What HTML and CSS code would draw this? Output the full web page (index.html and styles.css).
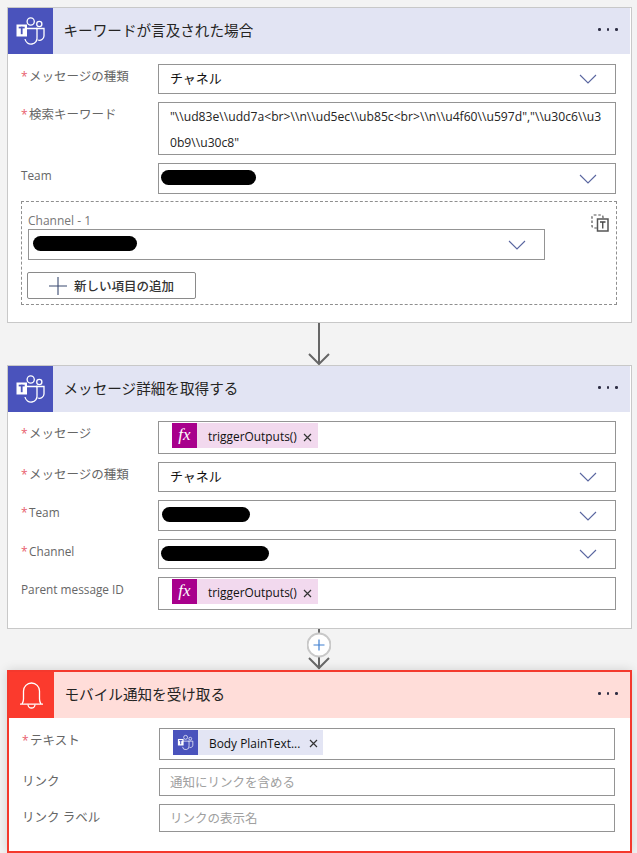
FILE: index.html
```html
<!DOCTYPE html>
<html lang="ja">
<head>
<meta charset="utf-8">
<title>フロー</title>
<link rel="stylesheet" href="styles.css">
</head>
<body>
<svg class="defs" width="0" height="0" aria-hidden="true">
  <symbol id="teams" viewBox="0 0 45 46">
    <circle cx="22.7" cy="13.5" r="3.6" fill="none" stroke="#fff" stroke-width="1.3"/>
    <circle cx="31.3" cy="16" r="2.6" fill="none" stroke="#fff" stroke-width="1.3"/>
    <path d="M28 20.5h8v7.5a4.5 4.5 0 0 1-6 4" fill="none" stroke="#fff" stroke-width="1.3"/>
    <path d="M17 20.5h12v8.500a6 6 0 0 1-12 2" fill="none" stroke="#fff" stroke-width="1.300"/>
    <rect x="8.500" y="16.500" width="10.500" height="12" fill="#fff"/>
    <rect x="10.700" y="18.700" width="6" height="1.700" fill="#4a53bc"/>
    <rect x="12.800" y="18.700" width="1.800" height="7.500" fill="#4a53bc"/>
  </symbol>
  <symbol id="chev" viewBox="0 0 18 10">
    <path d="M1 1l8 8 8-8" fill="none" stroke="#5a66a0" stroke-width="1.100"/>
  </symbol>
  <symbol id="close" viewBox="0 0 9 9">
    <path d="M1 1l7 7M8 1l-7 7" fill="none" stroke="#333" stroke-width="1.200"/>
  </symbol>
</svg>

<section class="card">
  <header class="head">
    <div class="tile tile-teams"><svg class="tile-svg"><use href="#teams"/></svg></div>
    <h2 class="title">キーワードが言及された場合</h2>
    <div class="more"><i></i><i></i><i></i></div>
  </header>
  <div class="body">
    <div class="row">
      <div class="label jp"><span class="req">*</span>メッセージの種類</div>
      <div class="input h30"><span class="val">チャネル</span><svg class="chev"><use href="#chev"/></svg></div>
    </div>
    <div class="row">
      <div class="label jp"><span class="req">*</span>検索キーワード</div>
      <div class="input area">"\\ud83e\\udd7a&lt;br&gt;\\n\\ud5ec\\ub85c&lt;br&gt;\\n\\u4f60\\u597d","\\u30c6\\u30b9\\u30c8"</div>
    </div>
    <div class="row">
      <div class="label">Team</div>
      <div class="input h31 tight"><span class="pill p95"></span><svg class="chev"><use href="#chev"/></svg></div>
    </div>
    <div class="group">
      <svg class="ticon" viewBox="0 0 18 18"><rect x="1" y="1" width="11" height="13" rx="2" fill="none" stroke="#555" stroke-width="1.200" stroke-dasharray="2.500 1.800"/><rect x="6.500" y="5" width="10.500" height="12" fill="#fff" stroke="#555" stroke-width="1.500"/><path d="M9 8h5.500M11.750 8v6.500" fill="none" stroke="#444" stroke-width="1.300"/></svg>
      <div class="group-label">Channel - 1</div>
      <div class="input h31 tight4 narrow"><span class="pill p104"></span><svg class="chev"><use href="#chev"/></svg></div>
      <button class="add" type="button"><svg class="plus" viewBox="0 0 18 18"><path d="M9 0v18M0 9h18" stroke="#3a4a70" stroke-width="1.100"/></svg>新しい項目の追加</button>
    </div>
  </div>
</section>

<div class="link"><svg class="arrow" viewBox="0 0 24 42"><path d="M12 0v41M2 31l10 10 10-10" fill="none" stroke="#666" stroke-width="2"/></svg></div>

<section class="card">
  <header class="head">
    <div class="tile tile-teams"><svg class="tile-svg"><use href="#teams"/></svg></div>
    <h2 class="title">メッセージ詳細を取得する</h2>
    <div class="more"><i></i><i></i><i></i></div>
  </header>
  <div class="body body-b">
    <div class="row">
      <div class="label jp"><span class="req">*</span>メッセージ</div>
      <div class="input h33 chipbox"><span class="chip chip-fx"><span class="fx">fx</span><span class="chip-text">triggerOutputs()</span><svg class="x"><use href="#close"/></svg></span></div>
    </div>
    <div class="row">
      <div class="label jp"><span class="req">*</span>メッセージの種類</div>
      <div class="input h30"><span class="val">チャネル</span><svg class="chev"><use href="#chev"/></svg></div>
    </div>
    <div class="row">
      <div class="label"><span class="req">*</span>Team</div>
      <div class="input h31 tight2"><span class="pill p88"></span><svg class="chev"><use href="#chev"/></svg></div>
    </div>
    <div class="row">
      <div class="label"><span class="req">*</span>Channel</div>
      <div class="input h30 tight"><span class="pill p108"></span><svg class="chev"><use href="#chev"/></svg></div>
    </div>
    <div class="row">
      <div class="label">Parent message ID</div>
      <div class="input h33 chipbox"><span class="chip chip-fx"><span class="fx">fx</span><span class="chip-text">triggerOutputs()</span><svg class="x"><use href="#close"/></svg></span></div>
    </div>
  </div>
</section>

<div class="link link-b"><svg class="arrow" viewBox="0 0 24 41"><path d="M12 0v40M2 29l10 10 10-10" fill="none" stroke="#666" stroke-width="2"/><circle cx="12" cy="16" r="11.500" fill="#fff" stroke="#c8c8c8" stroke-width="2"/><path d="M12 10.500v11M6.500 16h11" stroke="#3f7fd0" stroke-width="1.200"/></svg></div>

<section class="card card-red">
  <header class="head head-red">
    <div class="tile tile-red"><svg class="tile-svg" viewBox="0 0 45 46"><path d="M11 32.200h23M13 32c1-1.500 1.500-3 1.500-5v-8a8 8 0 0 1 16 0v8c0 2 .5 3.500 1.500 5" fill="none" stroke="#fff" stroke-width="1.300" stroke-linejoin="round"/><path d="M19 32.500a3.500 3.500 0 0 0 7 0" fill="none" stroke="#fff" stroke-width="1.300"/></svg></div>
    <h2 class="title">モバイル通知を受け取る</h2>
    <div class="more"><i></i><i></i><i></i></div>
  </header>
  <div class="body body-c">
    <div class="row">
      <div class="label jp"><span class="req">*</span>テキスト</div>
      <div class="input h32 chipbox chipbox-c"><span class="chip chip-teams"><span class="chip-tile"><svg class="chip-svg"><use href="#teams"/></svg></span><span class="chip-text">Body PlainText...</span><svg class="x"><use href="#close"/></svg></span></div>
    </div>
    <div class="row">
      <div class="label jp low">リンク</div>
      <div class="input h28"><span class="ph">通知にリンクを含める</span></div>
    </div>
    <div class="row">
      <div class="label jp low">リンク ラベル</div>
      <div class="input h28"><span class="ph">リンクの表示名</span></div>
    </div>
  </div>
</section>
</body>
</html>
```
FILE: styles.css
```css
* { box-sizing: border-box; }
html, body { margin: 0; height: 853px; overflow: hidden; }
body {
  padding: 7px 5px 0 7px;
  background: #f3f3f3;
  font-family: "Open Sans", "Noto Sans CJK JP", sans-serif;
  font-size: 13px;
  color: #252423;
}
.defs { position: absolute; }
.card { background: #fff; border: 1px solid #c8c8c8; }
.card-red { border: 2px solid #f4392d; height: 183px; box-shadow: 0 0 10px rgba(0,0,0,.14); }
.head { display: flex; align-items: center; height: 46px; background: #e2e4f3; margin-right: 1px; }
.head-red { background: #ffddd9; margin-right: 0; }
.tile { width: 45px; height: 46px; flex: none; }
.tile-teams { background: #4a53bc; }
.tile-red { background: #fb3a2d; }
.tile-svg { display: block; width: 45px; height: 46px; }
.title { flex: 1; margin: 0 0 3px 10.500px; font-size: 14.600px; font-weight: 400; color: #252423; }
.more { display: flex; gap: 6px; margin: 0 12.500px 3px 0; }
.more i { width: 2.500px; height: 2.500px; border-radius: 50%; background: #2e2e44; }

.body { display: flex; flex-direction: column; gap: 8px; padding: 10px 15px 17px 13px; }
.body-b { padding: 9px 15px 18px 13px; }
.body-c { padding: 10px 15px 18px 13px; }
.row { display: grid; grid-template-columns: 137px 1fr; }
.label { padding-top: 4px; line-height: 16px; font-size: 11.800px; color: #666; white-space: nowrap; }
.jp { font-size: 12.500px; padding-top: 5px; }
.low { padding-top: 6px; }
.req { display: inline-block; width: 8px; color: #e8606e; font-size: 12px; }

.input { display: flex; align-items: center; border: 1px solid #949494; background: #fff; padding-left: 11px; }
.h28 { height: 28px; }
.h30 { height: 30px; }
.h31 { height: 31px; }
.h32 { height: 32px; }
.h33 { height: 33px; }
.val { flex: 1; margin-bottom: 3px; font-size: 13px; color: #111; }
.area { display: block; height: 53px; padding: 1px 10px 0 11px; font-size: 12.150px; line-height: 25.500px; word-break: break-all; color: #252423; }
.tight { padding-left: 2px; }
.tight2 { padding-left: 3px; }
.tight4 { padding-left: 3.500px; }
.tight .pill, .tight2 .pill, .tight4 .pill { margin-bottom: 2px; }
.pill { display: block; height: 15px; border-radius: 8px; background: #000; margin-right: auto; }
.p95 { width: 95px; }
.p104 { width: 104px; }
.p88 { width: 88px; }
.p108 { width: 108px; }
.chev { width: 18px; height: 10px; flex: none; margin-right: 18px; }
.ph { margin: 0 0 2px -1px; font-size: 12.500px; color: #a0a0a0; }

.group { position: relative; margin: -1px -1px 0 0; height: 104px; border: 1px dashed #8f8f8f; padding: 11px 0 0 6px; }
.group-label { height: 16px; line-height: 16px; font-size: 12px; color: #777; }
.narrow { width: 517px; }
.ticon { position: absolute; top: 12px; right: 7px; width: 18px; height: 18px; }
.add { display: flex; align-items: center; width: 169px; height: 27px; margin: 12px 0 0 -1px; padding: 0 0 0 21px; gap: 7px; background: #fff; border: 1px solid #8a8a8a; border-radius: 2px; font: 500 12.500px "Open Sans", "Noto Sans CJK JP", sans-serif; color: #333; }
.plus { width: 18px; height: 18px; flex: none; }

.link { display: flex; justify-content: center; height: 42px; padding-right: 2px; }
.link-b { height: 41px; }
.arrow { display: block; width: 24px; height: 100%; }

.chipbox { padding-left: 13px; padding-bottom: 4px; }
.chipbox-c { padding-bottom: 3px; }
.chip { display: flex; align-items: center; height: 25px; }
.chip-fx { width: 146px; background: #f2d9ee; }
.chip-teams { width: 150px; background: #e3e5f4; }
.fx { width: 25px; height: 25px; background: #a8008c; color: #fff; text-align: center; font: italic 17px/24px "Liberation Serif", serif; flex: none; }
.chip-tile { width: 25px; height: 25px; flex: none; background: #4a53bc; }
.chip-svg { display: block; width: 25px; height: 25px; }
.chip-text { margin: 1px 0 0 11px; font-size: 11.900px; color: #111; white-space: nowrap; }
.chip-teams .chip-text { margin-top: 0; }
.x { width: 9px; height: 9px; flex: none; margin: 3px 6px 0 auto; }
.chip-teams .x { margin: 2px 5px 0 auto; }
```
